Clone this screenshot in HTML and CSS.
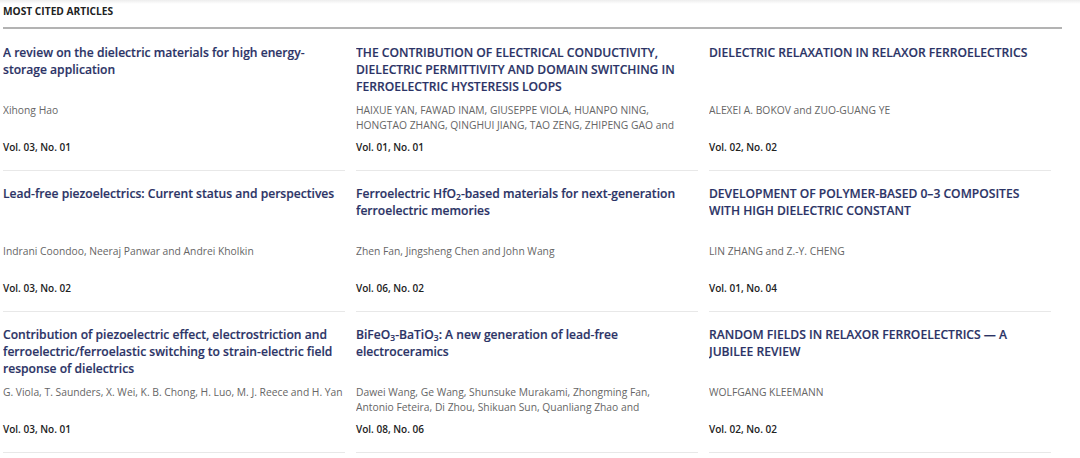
FILE: index.html
```html
<!DOCTYPE html>
<html lang="en">
<head>
<meta charset="utf-8">
<title>Most Cited Articles</title>
<link rel="stylesheet" href="styles.css">
</head>
<body>
<div class="topshade"></div>
<section class="cited">
  <h2 class="cited-heading">Most Cited Articles</h2>
  <div class="cited-rule"></div>
  <div class="cited-grid">
    <article class="card">
      <h3 class="card-title">A review on the dielectric materials for high energy-storage application</h3>
      <p class="card-authors">Xihong Hao</p>
      <p class="card-vol">Vol. 03, No. 01</p>
    </article>
    <article class="card">
      <h3 class="card-title">THE CONTRIBUTION OF ELECTRICAL CONDUCTIVITY, DIELECTRIC PERMITTIVITY AND DOMAIN SWITCHING IN FERROELECTRIC HYSTERESIS LOOPS</h3>
      <p class="card-authors">HAIXUE YAN, FAWAD INAM, GIUSEPPE VIOLA, HUANPO NING, HONGTAO ZHANG, QINGHUI JIANG, TAO ZENG, ZHIPENG GAO and MICHAEL J. REECE</p>
      <p class="card-vol">Vol. 01, No. 01</p>
    </article>
    <article class="card">
      <h3 class="card-title">DIELECTRIC RELAXATION IN RELAXOR FERROELECTRICS</h3>
      <p class="card-authors">ALEXEI A. BOKOV and ZUO-GUANG YE</p>
      <p class="card-vol">Vol. 02, No. 02</p>
    </article>
    <article class="card">
      <h3 class="card-title">Lead-free piezoelectrics: Current status and perspectives</h3>
      <p class="card-authors">Indrani Coondoo, Neeraj Panwar and Andrei Kholkin</p>
      <p class="card-vol">Vol. 03, No. 02</p>
    </article>
    <article class="card">
      <h3 class="card-title">Ferroelectric HfO<sub>2</sub>-based materials for next-generation ferroelectric memories</h3>
      <p class="card-authors">Zhen Fan, Jingsheng Chen and John Wang</p>
      <p class="card-vol">Vol. 06, No. 02</p>
    </article>
    <article class="card">
      <h3 class="card-title">DEVELOPMENT OF POLYMER-BASED 0–3 COMPOSITES WITH HIGH DIELECTRIC CONSTANT</h3>
      <p class="card-authors">LIN ZHANG and Z.-Y. CHENG</p>
      <p class="card-vol">Vol. 01, No. 04</p>
    </article>
    <article class="card">
      <h3 class="card-title">Contribution of piezoelectric effect, electrostriction and ferroelectric/ferroelastic switching to strain-electric field response of dielectrics</h3>
      <p class="card-authors">G. Viola, T. Saunders, X. Wei, K. B. Chong, H. Luo, M. J. Reece and H. Yan</p>
      <p class="card-vol">Vol. 03, No. 01</p>
    </article>
    <article class="card">
      <h3 class="card-title">BiFeO<sub>3</sub>-BaTiO<sub>3</sub>: A new generation of lead-free electroceramics</h3>
      <p class="card-authors">Dawei Wang, Ge Wang, Shunsuke Murakami, Zhongming Fan, Antonio&nbsp;Feteira, Di Zhou, Shikuan Sun, Quanliang Zhao and Ian&nbsp;M.&nbsp;Reaney</p>
      <p class="card-vol">Vol. 08, No. 06</p>
    </article>
    <article class="card">
      <h3 class="card-title">RANDOM FIELDS IN RELAXOR FERROELECTRICS — A JUBILEE REVIEW</h3>
      <p class="card-authors">WOLFGANG KLEEMANN</p>
      <p class="card-vol">Vol. 02, No. 02</p>
    </article>
  </div>
</section>
</body>
</html>
```

FILE: styles.css
```css
html, body {
  margin: 0;
  padding: 0;
  background: #fff;
}
body {
  font-family: "Open Sans", "Noto Sans", sans-serif;
  color: #222;
  overflow: hidden;
}
.topshade {
  height: 4px;
  background: linear-gradient(to bottom, rgba(0,0,0,0.07), rgba(0,0,0,0));
  margin-bottom: -4px;
}
.cited {
  width: 1059px;
  margin-left: 3px;
}
.cited-heading {
  margin: 0;
  padding-top: 4px;
  font-size: 10.2px;
  line-height: 14px;
  font-weight: 700;
  text-transform: uppercase;
  color: #222;
  height: 23px;
}
.cited-rule {
  height: 2px;
  background: #b3b3b3;
  margin-bottom: 1px;
}
.cited-grid {
  display: grid;
  grid-template-columns: repeat(3, 353px);
}
.card {
  margin-right: 11px;
  padding: 14px 0 16px;
  border-bottom: 1px solid #e8e8e8;
  display: flex;
  flex-direction: column;
}
.card-title {
  margin: 0;
  height: 51px;
  font-size: 12.1px;
  line-height: 17px;
  font-weight: 600;
  color: #2b3366;
  overflow: hidden;
  -webkit-text-stroke: 0.15px #2b3366;
}
.card-title sub {
  font-size: 8.5px;
  line-height: 0;
  vertical-align: -2px;
}
.card-authors {
  margin: 8px 0 0;
  height: 30px;
  font-size: 10.3px;
  line-height: 15px;
  color: #666;
  overflow: hidden;
}
.card-vol {
  margin: 7px 0 0;
  font-size: 10px;
  line-height: 14px;
  font-weight: 600;
  color: #222;
}
```
